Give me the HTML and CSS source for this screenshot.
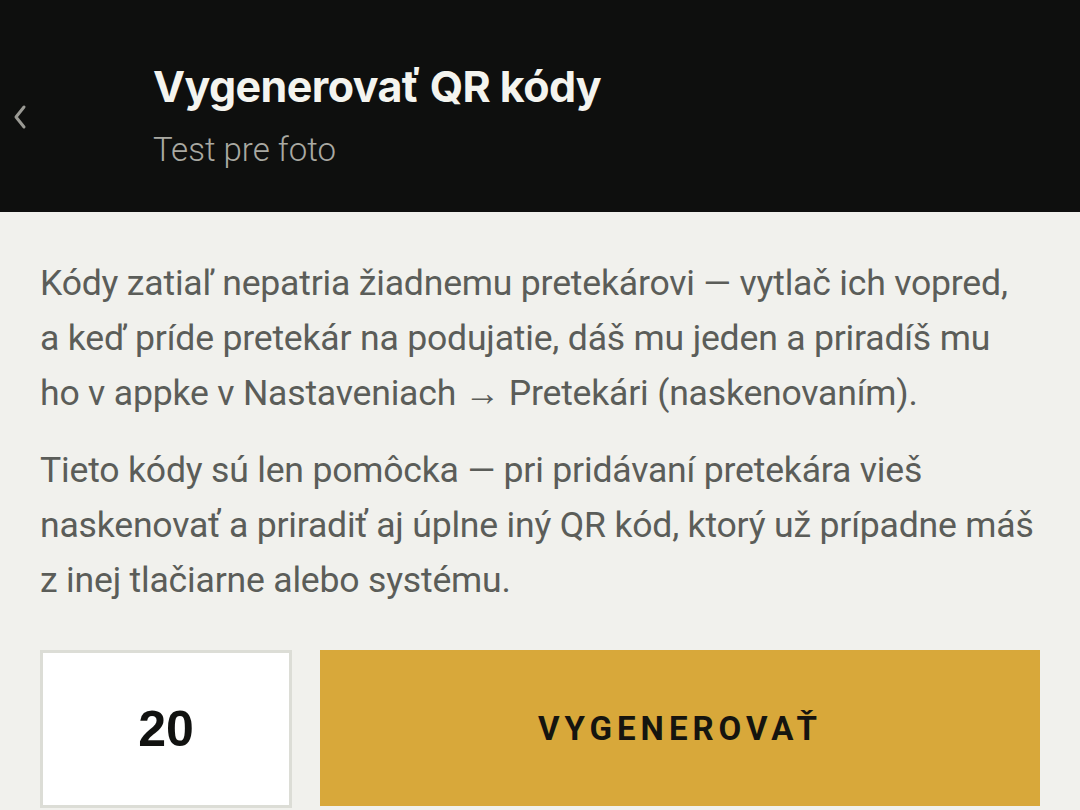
FILE: index.html
```html
<!DOCTYPE html>
<html lang="sk">
<head>
<meta charset="utf-8">
<title>Vygenerovať QR kódy</title>
<link rel="stylesheet" href="styles.css">
</head>
<body>
<header class="topbar">
  <div class="back"><svg class="back-icon" width="16" height="26" viewBox="0 0 16 26"><polyline points="12,3 4,13 12,23" fill="none" stroke="#9a9a94" stroke-width="3" stroke-linecap="round" stroke-linejoin="round"/></svg></div>
  <div class="titles">
    <h1 class="title">Vygenerovať QR kódy</h1>
    <div class="subtitle">Test pre foto</div>
  </div>
</header>
<main class="content">
  <p class="text">Kódy zatiaľ nepatria žiadnemu pretekárovi — vytlač ich vopred,<br>a keď príde pretekár na podujatie, dáš mu jeden a priradíš mu<br>ho v appke v Nastaveniach → Pretekári (naskenovaním).</p>
  <p class="text">Tieto kódy sú len pomôcka — pri pridávaní pretekára vieš<br>naskenovať a priradiť aj úplne iný QR kód, ktorý už prípadne máš<br>z inej tlačiarne alebo systému.</p>
  <div class="actions">
    <div class="count">20</div>
    <div class="generate">VYGENEROVAŤ</div>
  </div>
</main>
</body>
</html>
```
FILE: styles.css
```css
html, body {
  margin: 0;
  padding: 0;
}
body {
  background: #f1f1ed;
  font-family: Roboto, "Liberation Sans", sans-serif;
  overflow: hidden;
}
.topbar {
  background: #0e0f0e;
  height: 212px;
  display: flex;
  align-items: center;
  box-sizing: border-box;
  padding-top: 18px;
}
.back {
  width: 153px;
  padding-left: 12px;
  box-sizing: border-box;
  display: flex;
  align-items: center;
  margin-top: 4px;
}
.back-icon {
  display: block;
}
.titles {
  display: flex;
  flex-direction: column;
}
.title {
  margin: 0;
  color: #f4f4ef;
  font-family: Inter, sans-serif;
  font-weight: 700;
  font-size: 43px;
  letter-spacing: -0.6px;
  line-height: 52px;
}
.subtitle {
  color: #a9a9a2;
  font-family: Roboto, sans-serif;
  font-weight: 300;
  font-size: 33px;
  line-height: 40px;
  margin-top: 18px;
}
.content {
  padding: 44px 40px 0 40px;
}
.text {
  margin: 0 0 22px 0;
  color: #5b5d59;
  font-size: 35.6px;
  line-height: 55px;
  font-weight: 400;
  letter-spacing: -0.2px;
  white-space: nowrap;
}
.actions {
  display: flex;
  gap: 28px;
  margin-top: 42px;
}
.count {
  width: 252px;
  height: 158px;
  box-sizing: border-box;
  border: 3px solid #dcddd6;
  background: #ffffff;
  display: flex;
  align-items: center;
  justify-content: center;
  font-family: "Liberation Sans", Arial, sans-serif;
  font-weight: 700;
  font-size: 50px;
  color: #111210;
}
.generate {
  flex: 1;
  height: 156px;
  background: #d8a83a;
  display: flex;
  align-items: center;
  justify-content: center;
  font-family: Roboto, sans-serif;
  font-weight: 700;
  font-size: 33px;
  letter-spacing: 5px;
  color: #15140f;
}
```
